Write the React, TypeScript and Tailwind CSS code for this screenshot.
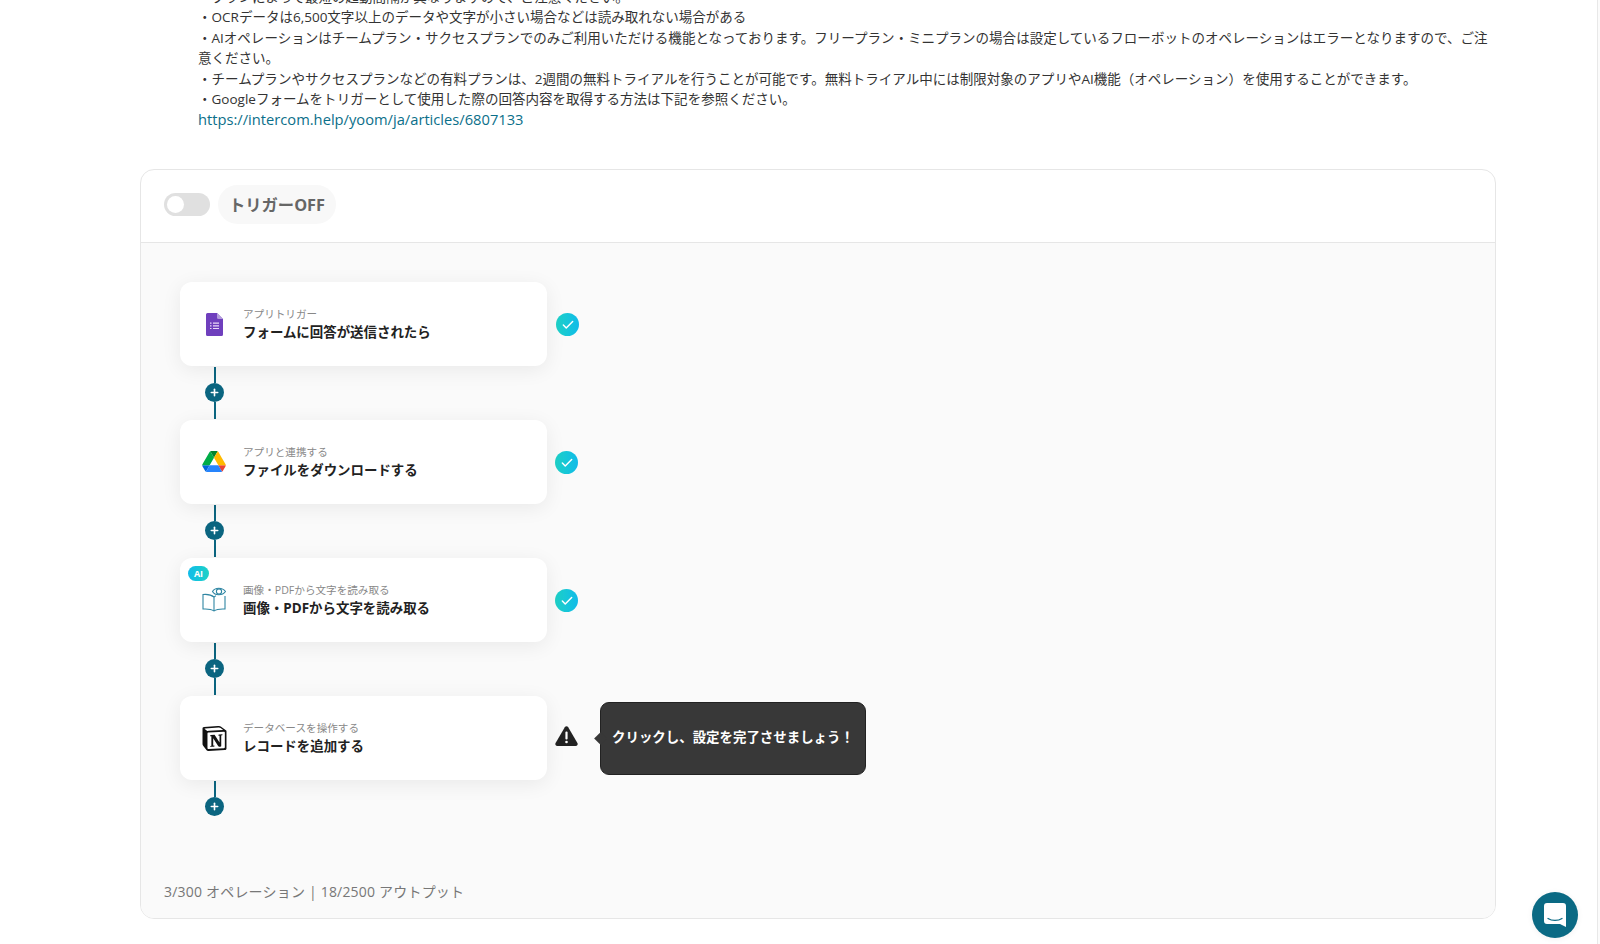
import { Check, Plus } from "lucide-react";
import { SiNotion } from "react-icons/si";

const FONT = "font-['Open_Sans','Noto_Sans_CJK_JP',sans-serif]";

function FormsIcon() {
  return (
    <svg className="mt-[1px]" width="17" height="23" viewBox="0 0 17 23">
      <path d="M1.5 0H11l6 6v15.5a1.5 1.5 0 0 1-1.5 1.5h-14A1.5 1.5 0 0 1 0 21.5v-20A1.5 1.5 0 0 1 1.5 0z" fill="#6f3fbd" />
      <path d="M11 0l6 6h-4.5A1.5 1.5 0 0 1 11 4.5z" fill="#b39ddb" />
      <path d="M4 9.5h1.5v1.2H4zM7 9.5h6v1.2H7zM4 12.2h1.5v1.2H4zM7 12.2h6v1.2H7zM4 14.9h1.5v1.2H4zM7 14.9h6v1.2H7z" fill="#ead9f7" />
    </svg>
  );
}

function DriveIcon() {
  return (
    <svg width="24" height="21" viewBox="0 0 87.3 78">
      <path d="m6.6 66.85 3.85 6.65c.8 1.4 1.95 2.5 3.3 3.3l13.75-23.8h-27.5c0 1.55.4 3.1 1.2 4.5z" fill="#0066da" />
      <path d="m43.65 25-13.75-23.8c-1.35.8-2.5 1.9-3.3 3.3l-25.4 44a9.06 9.06 0 0 0 -1.2 4.5h27.5z" fill="#00ac47" />
      <path d="m73.55 76.8c1.35-.8 2.5-1.9 3.3-3.3l1.6-2.75 7.65-13.25c.8-1.4 1.2-2.95 1.2-4.5h-27.502l5.852 11.5z" fill="#ea4335" />
      <path d="m43.65 25 13.75-23.8c-1.35-.8-2.9-1.2-4.5-1.2h-18.5c-1.6 0-3.15.45-4.5 1.2z" fill="#00832d" />
      <path d="m59.8 53h-32.3l-13.75 23.8c1.35.8 2.9 1.2 4.5 1.2h50.8c1.6 0 3.15-.45 4.5-1.2z" fill="#2684fc" />
      <path d="m73.4 26.5-12.7-22c-.8-1.4-1.95-2.5-3.3-3.3l-13.75 23.8 16.15 28h27.45c0-1.55-.4-3.1-1.2-4.5z" fill="#ffba00" />
    </svg>
  );
}

function BookIcon() {
  return (
    <svg className="-mt-[2px]" width="24" height="26" viewBox="0 0 24 26" fill="none" stroke="#2f86a3" strokeWidth="1.1">
      <path d="M12 25c-2.5-1.8-6-2.3-11-2V8.5c4-.4 8 0 11 2.5" />
      <path d="M12 25c2.5-1.8 6-2.3 11-2V10" />
      <path d="M12 11V25" />
      <path d="M12 11c.6-.5 1.2-.9 2-1.3" />
      <path d="M10.5 5.5c2.4-4.4 10-4.4 13 0-3 4.4-10.6 4.4-13 0z" />
      <circle cx="17" cy="5.5" r="2.6" />
    </svg>
  );
}

function WarningIcon() {
  return (
    <svg width="23" height="20" viewBox="0 0 23 20">
      <path d="M9.8 1.2a2 2 0 0 1 3.4 0l9.2 15.8a2 2 0 0 1-1.7 3H2.3a2 2 0 0 1-1.7-3z" fill="#222" />
      <rect x="10.4" y="5.5" width="2.2" height="8" rx="1" fill="#fff" />
      <circle cx="11.5" cy="16" r="1.3" fill="#fff" />
    </svg>
  );
}

function CheckBadge({ offset }: { offset: string }) {
  return (
    <div className={`${offset} mt-[2px] flex h-[23px] w-[23px] items-center justify-center rounded-full bg-gradient-to-r from-[#1fd1c6] to-[#12bbe9]`}>
      <Check size={14} strokeWidth={2.5} color="#fff" />
    </div>
  );
}

function Connector({ last }: { last?: boolean }) {
  return (
    <div className={`ml-[25px] flex w-[19px] flex-col items-center ${last ? "h-[36px] pt-[1px]" : "h-[54px] py-[1px]"}`}>
      <div className="w-[2px] flex-1 bg-[#0b6580]" />
      <div className="flex h-[19px] w-[19px] shrink-0 items-center justify-center rounded-full bg-[#0b6580]">
        <Plus size={11} strokeWidth={3.5} color="#fff" />
      </div>
      {!last && <div className="w-[2px] flex-1 bg-[#0b6580]" />}
    </div>
  );
}

function StepCard({ icon, label, title, ai }: { icon: React.ReactNode; label: string; title: string; ai?: boolean }) {
  return (
    <div className="relative flex h-[84px] w-[367px] items-center rounded-[12px] bg-white pl-[20px] shadow-[0_4px_20px_rgba(0,0,0,0.07)]">
      {ai && (
        <div className="absolute left-[8px] top-[8px] flex h-[15px] w-[21px] items-center justify-center rounded-full bg-gradient-to-r from-[#12bbe9] to-[#1fd1c6] text-[9px] font-bold text-white">
          AI
        </div>
      )}
      <div className="mr-[15px] flex w-[28px] items-center justify-center">{icon}</div>
      <div className="mt-[1px]">
        <div className="text-[10.6px] leading-[15px] text-[#888]">{label}</div>
        <div className="text-[13.45px] font-bold leading-[20px] text-[#222]">{title}</div>
      </div>
    </div>
  );
}

export default function App() {
  return (
    <div className={`${FONT} relative h-[944px] overflow-hidden bg-white`}>
      <div className="-mt-[13px] pl-[198px] pr-[100px] text-[13.52px] leading-[20.4px] text-[#333]">
        <p>・プランによって最短の起動間隔が異なりますので、ご注意ください。</p>
        <p>・OCRデータは6,500文字以上のデータや文字が小さい場合などは読み取れない場合がある</p>
        <p>・AIオペレーションはチームプラン・サクセスプランでのみご利用いただける機能となっております。フリープラン・ミニプランの場合は設定しているフローボットのオペレーションはエラーとなりますので、ご注意ください。</p>
        <p>・チームプランやサクセスプランなどの有料プランは、2週間の無料トライアルを行うことが可能です。無料トライアル中には制限対象のアプリやAI機能（オペレーション）を使用することができます。</p>
        <p>・Googleフォームをトリガーとして使用した際の回答内容を取得する方法は下記を参照ください。</p>
        <a className="block text-[14.7px] text-[#0b6f8a]">https://intercom.help/yoom/ja/articles/6807133</a>
      </div>

      <div className="ml-[140px] mt-[39px] w-[1356px] overflow-hidden rounded-[14px] border border-[#e6e6e6]">
        <div className="flex h-[73px] items-center gap-[8px] border-b border-[#e6e6e6] pb-[2px] pl-[23px]">
          <div className="flex h-[23px] w-[46px] items-center rounded-full bg-[#e0e0e0] pl-[3px]">
            <div className="h-[17px] w-[17px] rounded-full bg-white" />
          </div>
          <div className="flex h-[39px] items-center rounded-[20px] bg-[#f8f8f8] px-[11px] text-[16.3px] font-bold text-[#666]">
            トリガーOFF
          </div>
        </div>

        <div className="h-[675px] bg-[#fafafa] pl-[39px] pt-[39px]">
          <div className="flex items-center">
            <StepCard icon={<FormsIcon />} label="アプリトリガー" title="フォームに回答が送信されたら" />
            <CheckBadge offset="ml-[9px]" />
          </div>
          <Connector />
          <div className="flex items-center">
            <StepCard icon={<DriveIcon />} label="アプリと連携する" title="ファイルをダウンロードする" />
            <CheckBadge offset="ml-[8px]" />
          </div>
          <Connector />
          <div className="flex items-center">
            <StepCard icon={<BookIcon />} label="画像・PDFから文字を読み取る" title="画像・PDFから文字を読み取る" ai />
            <CheckBadge offset="ml-[8px]" />
          </div>
          <Connector />
          <div className="relative flex items-center">
            <StepCard icon={<SiNotion className="mt-[1px]" size={25} color="#111" />} label="データベースを操作する" title="レコードを追加する" />
            <div className="-mt-[4px] ml-[8px]">
              <WarningIcon />
            </div>
            <div className="absolute left-[420px] top-[6px] flex h-[73px] w-[266px] items-center rounded-[9px] border border-[#222] bg-[#383838] pb-[2px] pl-[11px] text-[13.45px] font-bold text-white">
              クリックし、設定を完了させましょう！
              <div className="absolute -left-[5px] top-[31px] h-[9px] w-[9px] rotate-45 bg-[#383838]" />
            </div>
          </div>
          <Connector last />
          <div className="-ml-[16px] mt-[66px] text-[14px] leading-[20px] tracking-[0.2px] text-[#777]">
            3/300 オペレーション | 18/2500 アウトプット
          </div>
        </div>
      </div>

      <div className="absolute bottom-0 right-0 top-0 w-[3px] border-l border-[#e8e8e8] bg-[#fbfbfb]" />

      <div className="absolute left-[1532px] top-[892px] flex h-[46px] w-[46px] items-center justify-center rounded-full bg-[#0b6a84] shadow-[0_1px_6px_rgba(0,0,0,0.06)]">
        <svg width="22" height="24" viewBox="0 0 22 24">
          <path d="M3 0h16a3 3 0 0 1 3 3v21l-6-3H3a3 3 0 0 1-3-3V3a3 3 0 0 1 3-3z" fill="#fff" />
          <path d="M4 15.5c4 2.6 10 2.6 14 0" stroke="#0b6a84" strokeWidth="1.3" fill="none" strokeLinecap="round" />
        </svg>
      </div>
    </div>
  );
}
